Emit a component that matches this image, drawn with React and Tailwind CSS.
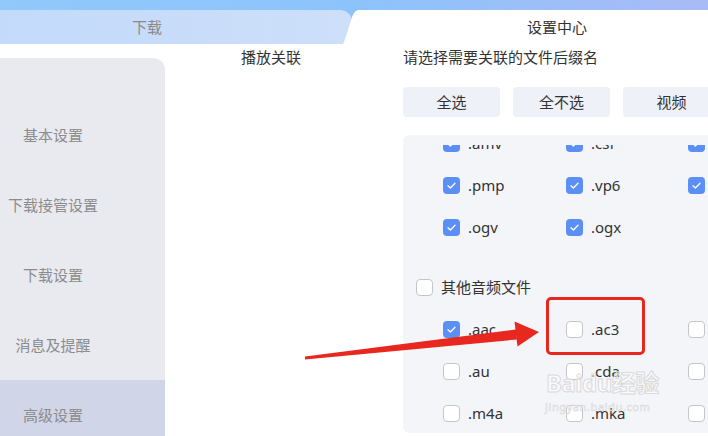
import React from "react";

const FONT = { fontFamily: '"Noto Sans", "Noto Sans CJK SC", sans-serif' };

function Box({ checked }) {
    if (checked) {
        return (
            <span className="w-[17px] h-[17px] rounded-[4px] bg-[#5c8ff6] flex items-center justify-center shrink-0">
                <svg width="17" height="17" viewBox="0 0 17 17">
                    <path d="M5 8.8 L7.4 11 L12 6.3" fill="none" stroke="white" strokeWidth="1.3" strokeLinecap="round" strokeLinejoin="round" />
                </svg>
            </span>
        );
    }
    return <span className="w-[17px] h-[17px] rounded-[4px] bg-white border border-[#c6c6c6] shrink-0" />;
}

function Item({ label, checked }) {
    return (
        <div className="flex items-center gap-2 whitespace-nowrap">
            <Box checked={checked} />
            <span className="text-[15px] text-[#333]">{label}</span>
        </div>
    );
}

function Row({ items }) {
    return (
        <div className="h-[42px] grid grid-cols-[123px_122px_122px] items-center pl-[40px]">
            {items.map((it, i) => (
                <div key={i}>{it && <Item label={it[0]} checked={it[1]} />}</div>
            ))}
        </div>
    );
}

export default function App() {
    const menu = ["基本设置", "下载接管设置", "下载设置", "消息及提醒", "高级设置"];

    return (
        <div className="relative w-[708px] h-[436px] overflow-hidden bg-white" style={FONT}>
            {/* tabs */}
            <div className="h-[44px] pt-[10px] flex bg-gradient-to-r from-[#92c9fb] via-[#8cc3fb] to-[#a8baf6]">
                <div className="w-[352px] shrink-0 h-[34px] rounded-tr-[12px] bg-gradient-to-r from-[#c3dafb] to-[#cddff9] flex items-center pl-[132px]">
                    <span className="text-[15px] text-[#8a8a8a]">下载</span>
                </div>
                <div className="flex-1 -ml-[9px] flex">
                    <svg width="16" height="34" viewBox="0 0 16 34" className="shrink-0">
                        <path d="M0 34 C3 28 6 16 9 7 Q11.5 0 16 0 L16 34 Z" fill="white" />
                    </svg>
                    <div className="flex-1 h-[34px] bg-white flex items-center pl-[168px]">
                        <span className="text-[15px] text-[#333]">设置中心</span>
                    </div>
                </div>
            </div>

            <div className="flex items-start">
                {/* side menu */}
                <div className="mt-[14px] w-[165px] shrink-0 h-[378px] bg-[#e9eaf0] rounded-tr-[12px] overflow-hidden pt-[42px]">
                    {menu.map((m, i) => (
                        <div
                            key={m}
                            className={"h-[70px] w-full flex items-center " + (i === 4 ? "bg-[#d0d5e7]" : "")}
                        >
                            <span className="w-[106px] text-center text-[15px] text-[#8c8c8c] whitespace-nowrap">{m}</span>
                        </div>
                    ))}
                </div>

                <div className="ml-[76px] w-[162px] shrink-0 leading-[26px] text-[15px] text-[#333]">播放关联</div>

                <div className="w-[340px] shrink-0">
                    <div className="leading-[26px] text-[15px] text-[#333] whitespace-nowrap">请选择需要关联的文件后缀名</div>
                    <div className="mt-[17px] flex gap-[13px]">
                        {["全选", "全不选", "视频"].map((b) => (
                            <div key={b} className="w-[97px] h-[30px] shrink-0 rounded-[4px] bg-[#eef1f7] flex items-center justify-center text-[15px] text-[#333]">
                                {b}
                            </div>
                        ))}
                    </div>

                    <div className="mt-[18px] w-[340px] h-[298px] rounded-[6px] bg-[#f4f5f9] pt-[10px]">
                        <div className="h-full overflow-hidden">
                            <div className="-mt-[23px]">
                                <Row items={[[".amv", true], [".csf", true], [".rm", true]]} />
                                <Row items={[[".pmp", true], [".vp6", true], [".f4v", true]]} />
                                <Row items={[[".ogv", true], [".ogx", true], null]} />
                                <div className="h-[18px]" />
                                <div className="h-[42px] flex items-center pl-[13px] gap-2">
                                    <Box checked={false} />
                                    <span className="text-[15px] text-[#333]">其他音频文件</span>
                                </div>
                                <Row items={[[".aac", true], [".ac3", false], [".aif", false]]} />
                                <Row items={[[".au", false], [".cda", false], [".mid", false]]} />
                                <Row items={[[".m4a", false], [".mka", false], [".mp2", false]]} />
                            </div>
                        </div>
                    </div>
                </div>
            </div>

            {/* watermark */}
            <div className="absolute left-[546px] top-[371px] text-[24px] font-bold leading-none tracking-[-0.5px] text-white/50 [-webkit-text-stroke:1px_#dadada] pointer-events-none">
                Baidu经验
            </div>
            <div className="absolute left-[545px] top-[401px] text-[11px] leading-none text-white/50 [-webkit-text-stroke:0.6px_#dadada] tracking-[0.6px] pointer-events-none">
                jingyan.baidu.com
            </div>

            {/* annotation */}
            <div className="absolute left-[546px] top-[297px] w-[99px] h-[58px] border-[3px] border-[#e8271f] rounded-[5px] pointer-events-none" />
            <svg className="absolute inset-0 pointer-events-none" width="708" height="436" viewBox="0 0 708 436">
                <polygon points="305,356.5 516,329.5 517,339.5 305,359.5" fill="#e8271f" />
                <polygon points="514.5,321.5 539,332 517.5,346.5" fill="#e8271f" />
            </svg>
        </div>
    );
}
